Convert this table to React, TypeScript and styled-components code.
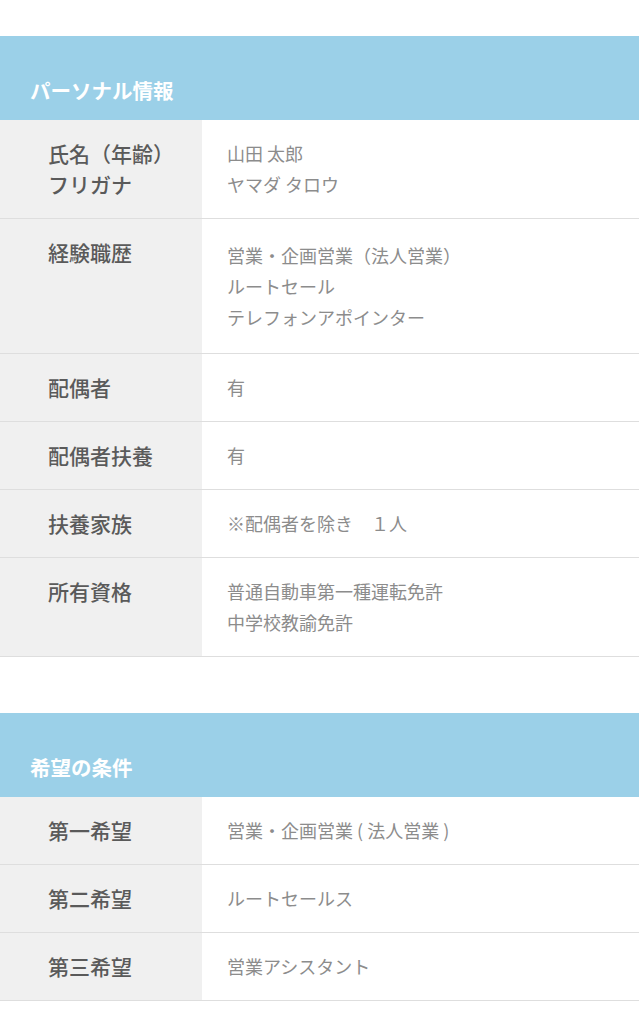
import React from "react";
import styled, { createGlobalStyle } from "styled-components";

const GlobalStyle = createGlobalStyle`
  html, body {
    margin: 0;
    padding: 0;
    background: #ffffff;
  }
  body {
    font-family: "Noto Sans CJK JP", "Noto Sans", sans-serif;
  }
`;

const Page = styled.main`
  width: 639px;
  padding-top: 36px;
  display: flex;
  flex-direction: column;
  gap: 56px;
`;

const Section = styled.section`
  display: flex;
  flex-direction: column;
`;

const Header = styled.h2`
  margin: 0;
  background: #9bd0e8;
  color: #ffffff;
  font-size: 20.5px;
  font-weight: 700;
  line-height: 30px;
  padding: 39px 30px 15px;
`;

const Row = styled.div<{ $extra?: number }>`
  display: grid;
  grid-template-columns: 202px 1fr;
  border-bottom: 1px solid #dedede;
  --extra: ${(p) => p.$extra ?? 0}px;
`;

const Label = styled.div`
  background: #f0f0f0;
  color: #5a5a5a;
  font-size: 21px;
  font-weight: 500;
  line-height: 31px;
  padding: 18px 0 18px 48px;
`;

const Value = styled.div`
  color: #8c8c8c;
  font-size: 18px;
  font-weight: 400;
  line-height: 31px;
  padding: calc(18px + var(--extra)) 0 calc(18px + var(--extra)) 25px;
`;

const Line = styled.div`
  white-space: pre;
`;

type Item = { label: string[]; value: string[]; extra?: number };

const personal: Item[] = [
  { label: ["氏名（年齢）", "フリガナ"], value: ["山田 太郎", "ヤマダ タロウ"] },
  {
    label: ["経験職歴"],
    value: ["営業・企画営業（法人営業）", "ルートセール", "テレフォンアポインター"],
    extra: 2.5,
  },
  { label: ["配偶者"], value: ["有"] },
  { label: ["配偶者扶養"], value: ["有"] },
  { label: ["扶養家族"], value: ["※配偶者を除き　１人"] },
  { label: ["所有資格"], value: ["普通自動車第一種運転免許", "中学校教諭免許"] },
];

const wishes: Item[] = [
  { label: ["第一希望"], value: ["営業・企画営業 ( 法人営業 )"] },
  { label: ["第二希望"], value: ["ルートセールス"] },
  { label: ["第三希望"], value: ["営業アシスタント"] },
];

function InfoSection({ title, items }: { title: string; items: Item[] }) {
  return (
    <Section>
      <Header>{title}</Header>
      {items.map((it, i) => (
        <Row key={i} $extra={it.extra}>
          <Label>
            {it.label.map((l, j) => (
              <Line key={j}>{l}</Line>
            ))}
          </Label>
          <Value>
            {it.value.map((v, j) => (
              <Line key={j}>{v}</Line>
            ))}
          </Value>
        </Row>
      ))}
    </Section>
  );
}

export default function App() {
  return (
    <>
      <GlobalStyle />
      <Page>
        <InfoSection title="パーソナル情報" items={personal} />
        <InfoSection title="希望の条件" items={wishes} />
      </Page>
    </>
  );
}
